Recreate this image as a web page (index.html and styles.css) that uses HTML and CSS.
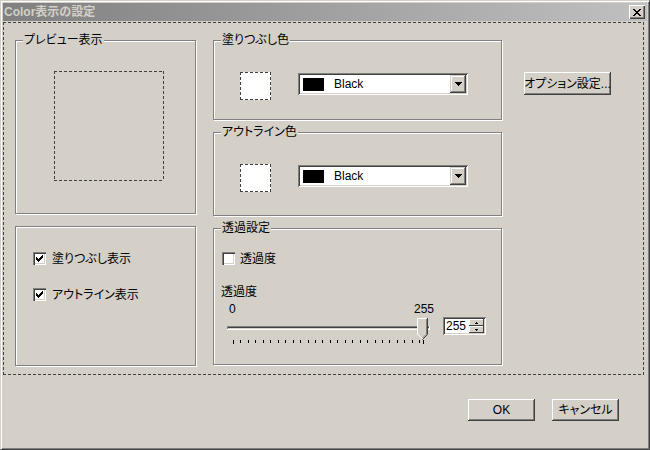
FILE: index.html
```html
<!DOCTYPE html>
<html lang="ja">
<head>
<meta charset="utf-8">
<title>Color表示の設定</title>
<link rel="stylesheet" href="styles.css">
</head>
<body>
<div class="window">
  <div class="titlebar">
    <span class="title">Color表示の設定</span>
    <span class="close">
      <svg width="8" height="7" viewBox="0 0 8 7"><path fill="#000" d="M0 0h2v1h-2z M6 0h2v1h-2z M1 1h2v1h-2z M5 1h2v1h-2z M2 2h2v1h-2z M4 2h2v1h-2z M3 3h2v1h-2z M2 4h2v1h-2z M4 4h2v1h-2z M1 5h2v1h-2z M5 5h2v1h-2z M0 6h2v1h-2z M6 6h2v1h-2z"/></svg>
    </span>
  </div>
  <div class="panel dash">
    <div class="col-left">
      <div class="group preview-group">
        <div class="legend">プレビュー表示</div>
        <div class="preview dash"></div>
      </div>
      <div class="group check-group">
        <div class="check">
          <span class="cb"><svg width="7" height="7" viewBox="0 0 7 7"><path fill="#000" d="M6 0h1v1h-1z M5 1h2v1h-2z M0 2h1v1h-1z M4 2h3v1h-3z M0 3h2v1h-2z M3 3h3v1h-3z M0 4h5v1h-5z M1 5h3v1h-3z M2 6h1v1h-1z"/></svg></span>
          <span>塗りつぶし表示</span>
        </div>
        <div class="check">
          <span class="cb"><svg width="7" height="7" viewBox="0 0 7 7"><path fill="#000" d="M6 0h1v1h-1z M5 1h2v1h-2z M0 2h1v1h-1z M4 2h3v1h-3z M0 3h2v1h-2z M3 3h3v1h-3z M0 4h5v1h-5z M1 5h3v1h-3z M2 6h1v1h-1z"/></svg></span>
          <span>アウトライン表示</span>
        </div>
      </div>
    </div>
    <div class="col-mid">
      <div class="group color-group">
        <div class="legend">塗りつぶし色</div>
        <div class="color-row">
          <div class="swatch dash"></div>
          <div class="combo">
            <span class="chip"></span>
            <span class="combo-text">Black</span>
            <span class="drop"><svg width="7" height="4" viewBox="0 0 7 4"><path fill="#000" d="M0 0h7v1h-7z M1 1h5v1h-5z M2 2h3v1h-3z M3 3h1v1h-1z"/></svg></span>
          </div>
        </div>
      </div>
      <div class="group color-group outline-group">
        <div class="legend">アウトライン色</div>
        <div class="color-row">
          <div class="swatch dash"></div>
          <div class="combo">
            <span class="chip"></span>
            <span class="combo-text">Black</span>
            <span class="drop"><svg width="7" height="4" viewBox="0 0 7 4"><path fill="#000" d="M0 0h7v1h-7z M1 1h5v1h-5z M2 2h3v1h-3z M3 3h1v1h-1z"/></svg></span>
          </div>
        </div>
      </div>
      <div class="group trans-group">
        <div class="legend">透過設定</div>
        <div class="check trans-check">
          <span class="cb"></span>
          <span>透過度</span>
        </div>
        <div class="trans-label">透過度</div>
        <div class="scale"><span>0</span><span>255</span></div>
        <div class="slider-row">
          <svg class="slider" width="218" height="30" viewBox="0 0 218 30">
            <rect x="5" y="10" width="203" height="1" fill="#808080"/>
            <rect x="5" y="11" width="1" height="2" fill="#808080"/>
            <rect x="6" y="11" width="201" height="1" fill="#404040"/>
            <rect x="5" y="13" width="203" height="1" fill="#ffffff"/>
            <rect x="207" y="10" width="1" height="4" fill="#ffffff"/>
            <polygon points="195,2 206,2 206,18 200.5,23.5 195,18" fill="#d4d0c8"/>
            <path d="M195.5 18.5 V2.5 H205.5 M195.5 18 L200.5 23" stroke="#ffffff" fill="none"/>
            <path d="M205.5 2 V18.5 L200.5 23.5" stroke="#404040" fill="none"/>
            <path d="M204.5 3 V18 L200.5 22" stroke="#808080" fill="none"/>
            <path stroke="#000" fill="none" d="M11.5 24v4 M18.5 24v3 M26.5 24v3 M33.5 24v3 M41.5 24v3 M48.5 24v3 M56.5 24v3 M63.5 24v3 M71.5 24v3 M78.5 24v3 M86.5 24v3 M93.5 24v3 M100.5 24v3 M108.5 24v3 M115.5 24v3 M123.5 24v3 M130.5 24v3 M138.5 24v3 M145.5 24v3 M153.5 24v3 M160.5 24v3 M167.5 24v3 M175.5 24v3 M182.5 24v3 M190.5 24v3 M197.5 24v3 M201.5 24v4"/>
          </svg>
          <div class="spin">
            <span class="spin-text">255</span>
            <span class="ud">
              <span class="ud-btn"><svg width="3" height="2" viewBox="0 0 3 2"><path fill="#000" d="M1 0h1v1h-1z M0 1h3v1h-3z"/></svg></span>
              <span class="ud-btn"><svg width="3" height="2" viewBox="0 0 3 2"><path fill="#000" d="M0 0h3v1h-3z M1 1h1v1h-1z"/></svg></span>
            </span>
          </div>
        </div>
      </div>
    </div>
    <div class="col-right">
      <button class="btn opt-btn">オプション設定...</button>
    </div>
  </div>
  <div class="footer">
    <button class="btn foot-btn">OK</button>
    <button class="btn foot-btn">キャンセル</button>
  </div>
</div>
</body>
</html>
```
FILE: styles.css
```css
* { box-sizing: border-box; }
html, body { margin: 0; padding: 0; }
body {
  width: 650px;
  height: 450px;
  overflow: hidden;
  background: #d4d0c8;
  font-family: "Liberation Sans", "Noto Sans CJK JP", sans-serif;
  font-size: 12px;
  color: #000;
  font-feature-settings: "palt";
}
.window {
  width: 650px;
  height: 450px;
  border: 1px solid;
  border-color: #d4d0c8 #404040 #404040 #d4d0c8;
  box-shadow: inset 1px 1px #ffffff, inset -1px -1px #808080;
  padding: 2px;
  display: flex;
  flex-direction: column;
}
.titlebar {
  height: 18px;
  flex: none;
  background: linear-gradient(to right, #808080, #c0c0c0);
  display: flex;
  align-items: center;
  justify-content: space-between;
  padding: 0 2px 0 1px;
}
.title {
  color: #d4d0c8;
  font-weight: bold;
  font-size: 12px;
  line-height: 14px;
}
.close {
  width: 16px;
  height: 14px;
  background: #d4d0c8;
  box-shadow: inset 1px 1px #ffffff, inset -1px -1px #404040, inset -2px -2px #808080;
  display: flex;
  align-items: center;
  justify-content: center;
}
.close svg { display: block; }
.dash {
  background-image:
    repeating-linear-gradient(90deg, #404040 0 3px, transparent 3px 5px),
    repeating-linear-gradient(90deg, #404040 0 3px, transparent 3px 5px),
    repeating-linear-gradient(180deg, #404040 0 3px, transparent 3px 5px),
    repeating-linear-gradient(180deg, #404040 0 3px, transparent 3px 5px);
  background-size: 100% 1px, 100% 1px, 1px 100%, 1px 100%;
  background-position: 0 0, 0 100%, 0 0, 100% 0;
  background-repeat: no-repeat;
}
.panel {
  margin-top: 1px;
  width: 641px;
  height: 353px;
  flex: none;
  display: flex;
  align-items: flex-start;
  padding: 18px 0 0 12px;
}
.col-left {
  width: 181px;
  display: flex;
  flex-direction: column;
  gap: 12px;
}
.col-mid {
  width: 289px;
  margin-left: 17px;
  display: flex;
  flex-direction: column;
  gap: 12px;
}
.col-right {
  margin-left: 22px;
  padding-top: 32px;
}
.group {
  border: 1px solid #808080;
  box-shadow: inset 1px 1px #ffffff, 1px 1px #ffffff;
}
.legend {
  margin: -8px 0 0 7px;
  padding: 0 1px;
  width: fit-content;
  background: #d4d0c8;
  line-height: 14px;
}
.preview-group { height: 174px; }
.preview {
  width: 110px;
  height: 110px;
  margin: 24px 0 0 38px;
}
.check-group {
  height: 140px;
  padding: 25px 0 0 17px;
  display: flex;
  flex-direction: column;
  gap: 23px;
}
.check {
  display: flex;
  align-items: center;
  gap: 6px;
  height: 13px;
  line-height: 14px;
}
.cb {
  width: 13px;
  height: 13px;
  flex: none;
  background: #ffffff;
  box-shadow: inset 1px 1px #808080, inset 2px 2px #404040, inset -1px -1px #ffffff, inset -2px -2px #d4d0c8;
  display: flex;
  align-items: center;
  justify-content: center;
}
.cb svg { display: block; }
.color-group { height: 80px; }
.outline-group { height: 84px; }
.color-row {
  display: flex;
  align-items: flex-start;
  margin-top: 25px;
  padding-left: 26px;
}
.swatch {
  width: 31px;
  height: 28px;
  background-color: #ffffff;
}
.combo {
  margin: 1px 0 0 27px;
  width: 170px;
  height: 22px;
  background: #ffffff;
  box-shadow: inset 1px 1px #808080, inset -1px -1px #ffffff, inset 2px 2px #404040, inset -2px -2px #d4d0c8;
  padding: 2px;
  display: flex;
  align-items: center;
}
.chip {
  width: 21px;
  height: 13px;
  background: #000;
  margin-left: 3px;
  flex: none;
}
.combo-text {
  flex: 1;
  margin-left: 10px;
  line-height: 14px;
}
.drop {
  width: 16px;
  height: 18px;
  flex: none;
  background: #d4d0c8;
  box-shadow: inset -1px -1px #404040, inset 1px 1px #d4d0c8, inset -2px -2px #808080, inset 2px 2px #ffffff;
  display: flex;
  align-items: center;
  justify-content: center;
}
.drop svg { display: block; }
.trans-group { height: 137px; }
.trans-check {
  margin-top: 17px;
  padding-left: 8px;
  gap: 5px;
}
.trans-label {
  margin-top: 20px;
  padding-left: 7px;
  line-height: 14px;
}
.scale {
  margin: 3px 0 0 15px;
  width: 205px;
  display: flex;
  justify-content: space-between;
  line-height: 14px;
}
.slider-row {
  display: flex;
  align-items: flex-start;
  padding-left: 8px;
}
.slider { display: block; flex: none; }
.spin {
  margin: 1px 0 0 3px;
  width: 43px;
  height: 18px;
  background: #ffffff;
  box-shadow: inset 1px 1px #808080, inset -1px -1px #ffffff, inset 2px 2px #404040, inset -2px -2px #d4d0c8;
  padding: 2px;
  display: flex;
  align-items: stretch;
}
.spin-text {
  flex: 1;
  padding-left: 1px;
  line-height: 14px;
}
.ud {
  width: 15px;
  display: flex;
  flex-direction: column;
}
.ud-btn {
  height: 7px;
  background: #d4d0c8;
  box-shadow: inset -1px -1px #404040, inset 1px 1px #ffffff;
  display: flex;
  align-items: center;
  justify-content: center;
}
.ud-btn svg { display: block; }
.btn {
  border: 0;
  padding: 0;
  margin: 0;
  background: #d4d0c8;
  box-shadow: inset -1px -1px #404040, inset 1px 1px #ffffff, inset -2px -2px #808080;
  font-family: "Liberation Sans", "Noto Sans CJK JP", sans-serif;
  font-size: 12px;
  font-feature-settings: "palt";
  color: #000;
  line-height: 14px;
}
.opt-btn {
  width: 87px;
  height: 23px;
}
.footer {
  display: flex;
  justify-content: flex-end;
  gap: 17px;
  margin-top: 24px;
  padding-right: 28px;
}
.foot-btn {
  width: 67px;
  height: 22px;
}
```
